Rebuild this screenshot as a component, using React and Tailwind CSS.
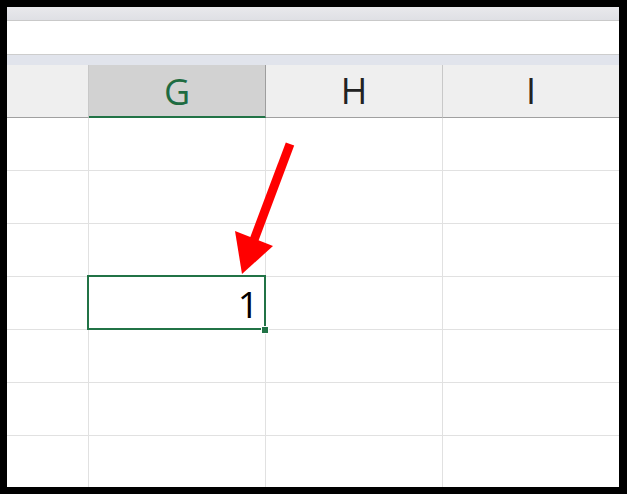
import React from "react";

const font = { fontFamily: '"Open Sans", "Noto Sans", sans-serif' };

function Row({ selected }) {
  return (
    <>
      <div className="h-[53px] border-b border-r border-[#e1e1e1] bg-white" />
      <div className={"h-[53px] border-b border-r border-[#e1e1e1] bg-white " + (selected ? "relative z-10" : "")}>
        {selected && (
          <>
            <div className="absolute -left-[2px] -top-[2px] right-[-1px] bottom-[-1px] border-2 border-[#217346]" />
            <div className="absolute right-[6px] top-[3px] text-[37px] leading-[48px] text-black" style={font}>
              1
            </div>
            <div className="absolute right-[-4px] bottom-[-5px] h-[8px] w-[8px] border border-white bg-[#217346]" />
          </>
        )}
      </div>
      <div className="h-[53px] border-b border-r border-[#e1e1e1] bg-white" />
      <div className="h-[53px] border-b border-[#e1e1e1] bg-white" />
    </>
  );
}

export default function App() {
  return (
    <div className="relative h-[494px] w-[627px] overflow-hidden bg-black pb-[7px] pl-[7px] pr-[8px] pt-[7px]">
      <div className="flex h-full w-full flex-col overflow-hidden bg-white">
        <div className="box-content h-[13px] shrink-0 border-b border-[#c9c9c9] bg-[linear-gradient(#e9e9ec,#dfe0e5)]" />
        <div className="box-content h-[33px] shrink-0 border-b border-[#cdcdcd] bg-white" />
        <div className="h-[10px] shrink-0 bg-[#e1e4ec]" />
        <div className="grid shrink-0 grid-cols-[82px_177px_177px_176px]">
          <div className="h-[53px] border-b border-r border-[#a0a0a0] border-r-[#c8c8c8] bg-[#efefef]" />
          <div
            className="flex h-[53px] items-center justify-center border-b-2 border-r border-b-[#217346] border-r-[#9e9e9e] bg-[#d2d2d2] pt-[2px] text-[36px] text-[#1e6b41]"
            style={font}
          >
            G
          </div>
          <div
            className="flex h-[53px] items-center justify-center border-b border-r border-[#a0a0a0] border-r-[#c8c8c8] bg-[#efefef] text-[36px] text-[#222]"
            style={font}
          >
            H
          </div>
          <div
            className="flex h-[53px] items-center justify-center border-b border-[#a0a0a0] bg-[#efefef] text-[36px] text-[#222]"
            style={font}
          >
            I
          </div>
          <Row />
          <Row />
          <Row />
          <Row selected />
          <Row />
          <Row />
          <Row />
        </div>
      </div>
      <svg className="pointer-events-none absolute left-0 top-0 z-20" width="627" height="494" viewBox="0 0 627 494">
        <line x1="290" y1="144" x2="254" y2="240" stroke="#ff0000" strokeWidth="9" />
        <polygon points="242,274 235,231 273,246" fill="#ff0000" />
      </svg>
    </div>
  );
}
